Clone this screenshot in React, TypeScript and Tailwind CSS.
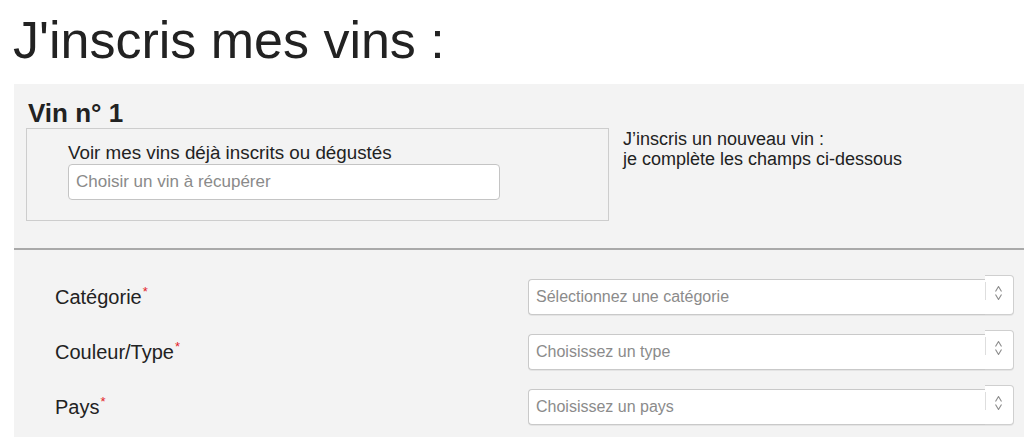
import React from "react";

const font = { fontFamily: '"Liberation Sans", Arial, Helvetica, sans-serif' };

function Arrows() {
  return (
    <svg width="9" height="16" viewBox="0 0 9 16" fill="none">
      <path d="M1.5 6.5 L4.5 1.5 L7.5 6.5" stroke="#8a8a8a" strokeWidth="1.1" strokeLinejoin="round" />
      <path d="M1.5 9.5 L4.5 14.5 L7.5 9.5" stroke="#8a8a8a" strokeWidth="1.1" strokeLinejoin="round" />
    </svg>
  );
}

function SelectBox({ placeholder }: { placeholder: string }) {
  return (
    <div className="flex items-start">
      <div className="flex-1 h-[36px] bg-white border border-r-0 border-[#c9c9c9] rounded-l-[4px] shadow-[0_1px_0_rgba(0,0,0,0.06)] flex items-center pl-[7px] text-[16px] text-[#8b8b8b]">
        {placeholder}
      </div>
      <div className="w-[29px] h-[40px] -mt-[4px] bg-white border border-l-0 border-[#cfcfcf] rounded-r-[4px] shadow-[0_1px_0_rgba(0,0,0,0.06)] flex items-start pt-[6px]">
        <div className="w-px h-[18px] bg-[#dedede]" />
        <div className="ml-[8px] mt-[3px]">
          <Arrows />
        </div>
      </div>
    </div>
  );
}

function Row({ label, placeholder }: { label: string; placeholder: string }) {
  return (
    <div className="grid grid-cols-[473px_1fr] items-start">
      <div className="text-[20px] leading-[22px] pt-[6px] text-[#222]">
        {label}
        <span className="text-[#e3232a] text-[13px] leading-none align-super ml-[1px]">*</span>
      </div>
      <SelectBox placeholder={placeholder} />
    </div>
  );
}

export default function App() {
  return (
    <div style={font} className="w-[1024px] h-[437px] overflow-hidden bg-white text-[#222]">
      <h1 className="mt-[14px] pl-[13px] text-[52px] leading-[52px] font-normal text-[#222]">
        J'inscris mes vins :
      </h1>
      <div className="mt-[18px] ml-[14px] bg-[#f3f3f3] pt-[16px] pb-[40px]">
        <div className="pl-[12px]">
          <h2 className="pl-[2px] text-[26px] leading-[26px] font-bold text-[#222]">Vin n° 1</h2>
          <div className="mt-[2px] flex items-start">
            <div className="w-[583px] h-[93px] border border-[#cdcdcd] pl-[41px] pt-[14px]">
              <div className="text-[18.8px] leading-[20px] text-[#222]">
                Voir mes vins déjà inscrits ou dégustés
              </div>
              <div className="mt-[1px] w-[432px] h-[36px] bg-white border border-[#c4c4c4] rounded-[4px] flex items-center pl-[7px] text-[17px] text-[#8a8a8a]">
                Choisir un vin à récupérer
              </div>
            </div>
            <div className="ml-[14px] pt-[1px] text-[18px] leading-[20px] text-[#222]">
              <div>J’inscris un nouveau vin :</div>
              <div>je complète les champs ci-dessous</div>
            </div>
          </div>
        </div>
        <div className="mt-[27px] border-t-2 border-[#a9a9a9]" />
        <div className="pt-[29px] pl-[41px] pr-[10px] flex flex-col gap-[19px]">
          <Row label="Catégorie" placeholder="Sélectionnez une catégorie" />
          <Row label="Couleur/Type" placeholder="Choisissez un type" />
          <Row label="Pays" placeholder="Choisissez un pays" />
        </div>
      </div>
    </div>
  );
}
